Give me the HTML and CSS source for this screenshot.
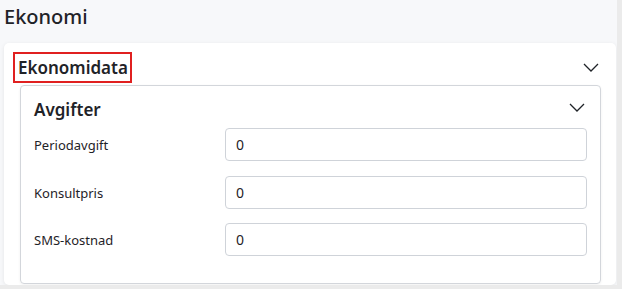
FILE: index.html
```html
<!DOCTYPE html>
<html lang="sv">
<head>
    <meta charset="UTF-8">
    <meta name="viewport" content="width=device-width, initial-scale=1.0">
    <title>Ekonomi</title>
    <link rel="stylesheet" href="styles.css">
</head>
<body>
    <div class="page">
        <h1 class="page-title">Ekonomi</h1>
        <div class="card">
            <div class="card-header">
                <span class="card-title highlighted">Ekonomidata</span>
                <svg class="chevron" width="16" height="9" viewBox="0 0 16 9"><path d="M1 1l7 7 7-7"/></svg>
            </div>
            <div class="panel">
                <div class="panel-header">
                    <span class="panel-title">Avgifter</span>
                    <svg class="chevron" width="16" height="9" viewBox="0 0 16 9"><path d="M1 1l7 7 7-7"/></svg>
                </div>
                <div class="row">
                    <label for="period">Periodavgift</label>
                    <input type="text" id="period" value="0">
                </div>
                <div class="row">
                    <label for="konsult">Konsultpris</label>
                    <input type="text" id="konsult" value="0">
                </div>
                <div class="row">
                    <label for="sms">SMS-kostnad</label>
                    <input type="text" id="sms" value="0">
                </div>
            </div>
        </div>
    </div>
</body>
</html>
```

FILE: styles.css
```css
html {
    background-color: #ebebeb;
}
body {
    margin: 0;
    font-family: "Noto Sans", "Open Sans", Arial, sans-serif;
    color: #1f2328;
}
.page {
    background-color: #f7f8fa;
    margin-right: 5px;
    height: 285px;
    padding: 0 0 0 4px;
    box-sizing: border-box;
    overflow: hidden;
}
.page-title {
    margin: 0;
    padding-top: 4px;
    height: 39px;
    font-size: 20px;
    font-weight: 500;
    line-height: 26px;
}
.card {
    background-color: white;
    width: 612px;
    border-radius: 5px;
    box-shadow: 0 1px 4px rgba(0, 0, 0, 0.08);
    padding: 8px 15px 0 16px;
    box-sizing: border-box;
    height: 242px;
}
.card-header {
    display: flex;
    justify-content: space-between;
    align-items: center;
    margin-left: -7px;
    padding-right: 2px;
    height: 32px;
}
.card-title {
    font-size: 17px;
    font-weight: 600;
    line-height: 24px;
}
.highlighted {
    border: 2px solid #e02020;
    padding: 2px 2px 1px 3px;
}
.chevron {
    fill: none;
    stroke: #1f2328;
    stroke-width: 1.3;
}
.panel {
    margin-top: 2px;
    border: 1px solid #d3d6db;
    border-radius: 4px;
    padding: 0 13px 27px 13px;
    box-shadow: 0 1px 3px rgba(0, 0, 0, 0.06);
}
.panel-header {
    display: flex;
    justify-content: space-between;
    align-items: center;
    height: 42px;
    padding-right: 2px;
}
.panel-title {
    font-size: 17px;
    font-weight: 600;
    padding-top: 5px;
}
.row {
    display: flex;
    align-items: center;
    margin-bottom: 15px;
}
.row + .row + .row {
    margin-bottom: 0;
    margin-top: -1px;
}
label {
    width: 191px;
    font-size: 13px;
}
input[type="text"] {
    flex: 1;
    height: 33px;
    border: 1px solid #cfd3d9;
    border-radius: 4px;
    padding: 0 10px;
    box-sizing: border-box;
    font-family: inherit;
    font-size: 14px;
    color: #1f2328;
}
```
